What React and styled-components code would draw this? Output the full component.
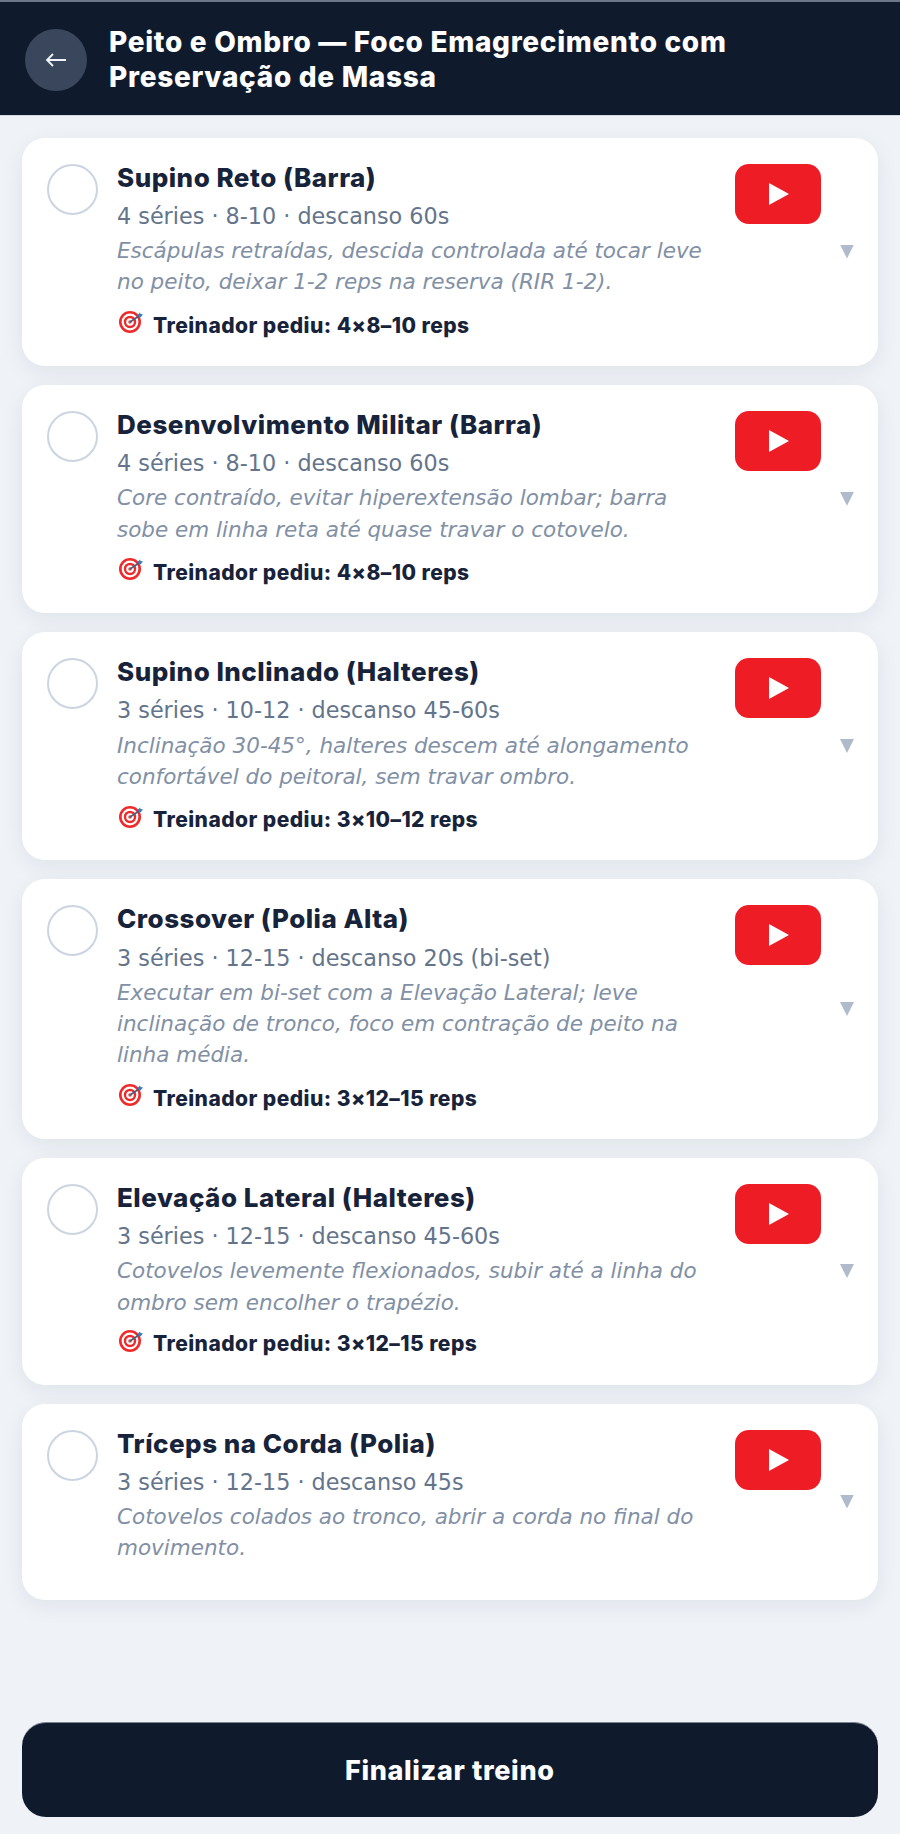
import React from 'react'
import styled, { createGlobalStyle } from 'styled-components'

const Global = createGlobalStyle`
  html, body { margin: 0; padding: 0; background: #eff3f8; }
  * { box-sizing: border-box; }
`

const Page = styled.div`
  width: 900px;
  height: 1834px;
  display: flex;
  flex-direction: column;
  background: #eff3f8;
  font-family: 'DejaVu Sans', sans-serif;
`

const Header = styled.header`
  height: 116px;
  flex: none;
  display: flex;
  align-items: center;
  gap: 22px;
  padding: 2px 22px 0 25px;
  background: #0f1b2d;
  border-top: 2px solid #6b7688;
  border-bottom: 1px solid #d5dae2;
`

const BackButton = styled.button`
  width: 62px;
  height: 62px;
  flex: none;
  display: flex;
  align-items: center;
  justify-content: center;
  padding: 0;
  border: 0;
  border-radius: 50%;
  background: #39465c;
  color: #f1f5f9;
`

const HeaderTitle = styled.h1`
  margin: 0;
  max-width: 700px;
  color: #fff;
  font-family: Inter, sans-serif;
  font-size: 28px;
  font-weight: 800;
  letter-spacing: 0.7px;
  line-height: 35px;
`

const List = styled.main`
  display: flex;
  flex-direction: column;
  gap: 19.1px;
  padding: 21.5px 22px 0 21.5px;
`

const Card = styled.article`
  display: flex;
  align-items: flex-start;
  padding: 24px 24px 24.2px 25px;
  background: #fff;
  border-radius: 23px;
  box-shadow: 0 6px 22px rgba(15, 27, 45, 0.07);
`

const Check = styled.span`
  width: 51px;
  height: 51px;
  flex: none;
  margin: 2px 19.5px 0 0;
  border: 2px solid #cbd5e1;
  border-radius: 50%;
`

const Body = styled.div`
  flex: 1;
  min-width: 0;
  margin-right: 24px;
`

const Name = styled.h2`
  margin: 0;
  color: #17233a;
  font-family: Inter, sans-serif;
  font-size: 26px;
  font-weight: 800;
  letter-spacing: 0.5px;
  line-height: 32px;
`

const Meta = styled.div`
  margin-top: 6.3px;
  color: #64748b;
  font-size: 22.3px;
  line-height: 32px;
`

const Note = styled.p`
  margin: 3.3px 0 12px;
  color: #8190a5;
  font-size: 21.5px;
  font-style: italic;
  line-height: 31.2px;
`

const Coach = styled.div`
  display: flex;
  align-items: center;
  gap: 10px;
  margin-top: ${p => (p.$tight ? '-1.5px' : '1.8px')};
  color: #17233a;
  font-family: Inter, sans-serif;
  font-size: 21px;
  font-weight: 800;
  letter-spacing: 0.45px;
  line-height: 32px;
`

const TargetSvg = styled.svg`
  flex: none;
  margin: 0 0 7px 2px;
`

const VideoButton = styled.button`
  width: 86px;
  height: 60px;
  flex: none;
  margin-top: 2px;
  display: flex;
  align-items: center;
  justify-content: center;
  padding: 0 0 0 2px;
  border: 0;
  border-radius: 14px;
  background: #ee1c25;
`

const Caret = styled.span`
  width: 14px;
  height: 14px;
  flex: none;
  align-self: center;
  margin-left: 19px;
  background: #afbacb;
  clip-path: polygon(0 0, 100% 0, 50% 100%);
`

const Footer = styled.footer`
  margin-top: auto;
  padding: 0 22px 17px 21.5px;
`

const FinishButton = styled.button`
  width: 100%;
  height: 95px;
  border: 0;
  border-top: 1px solid #7c8594;
  border-radius: 24px;
  background: #0f1b2d;
  color: #fff;
  font-family: Inter, sans-serif;
  font-size: 27px;
  font-weight: 800;
  letter-spacing: 0.65px;
`

const TargetIcon = () => (
  <TargetSvg width="24" height="22" viewBox="0 0 24 22">
    <circle cx="11" cy="11" r="11" fill="#ee2a2a" />
    <circle cx="11" cy="11" r="8.4" fill="#fff" />
    <circle cx="11" cy="11" r="6.2" fill="#ee2a2a" />
    <circle cx="11" cy="11" r="3.8" fill="#fff" />
    <circle cx="11" cy="11" r="1.8" fill="#d9534f" />
    <path d="M11 11 L20 5" stroke="#45607f" strokeWidth="1.6" />
    <path d="M18.5 4 L21 1.5 L21.5 3 L24 3.5 L21.5 6.5 Z" fill="#3d79b5" />
  </TargetSvg>
)

const exercises = [
  {
    name: 'Supino Reto (Barra)',
    meta: '4 séries · 8-10 · descanso 60s',
    note: 'Escápulas retraídas, descida controlada até tocar leve no peito, deixar 1-2 reps na reserva (RIR 1-2).',
    coach: '4×8–10 reps'
  },
  {
    name: 'Desenvolvimento Militar (Barra)',
    meta: '4 séries · 8-10 · descanso 60s',
    note: 'Core contraído, evitar hiperextensão lombar; barra sobe em linha reta até quase travar o cotovelo.',
    coach: '4×8–10 reps'
  },
  {
    name: 'Supino Inclinado (Halteres)',
    meta: '3 séries · 10-12 · descanso 45-60s',
    note: 'Inclinação 30-45°, halteres descem até alongamento confortável do peitoral, sem travar ombro.',
    coach: '3×10–12 reps'
  },
  {
    name: 'Crossover (Polia Alta)',
    meta: '3 séries · 12-15 · descanso 20s (bi-set)',
    note: 'Executar em bi-set com a Elevação Lateral; leve inclinação de tronco, foco em contração de peito na linha média.',
    coach: '3×12–15 reps'
  },
  {
    name: 'Elevação Lateral (Halteres)',
    meta: '3 séries · 12-15 · descanso 45-60s',
    note: 'Cotovelos levemente flexionados, subir até a linha do ombro sem encolher o trapézio.',
    coach: '3×12–15 reps',
    tight: true
  },
  {
    name: 'Tríceps na Corda (Polia)',
    meta: '3 séries · 12-15 · descanso 45s',
    note: 'Cotovelos colados ao tronco, abrir a corda no final do movimento.'
  }
]

export default function App () {
  return (
    <Page>
      <Global />
      <Header>
        <BackButton aria-label='Voltar'>
          <svg width="22" height="16" viewBox="0 0 22 16" fill="none" stroke="currentColor" strokeWidth="1.8">
            <path d="M21 8H2M8 2L2 8l6 6" />
          </svg>
        </BackButton>
        <HeaderTitle>Peito e Ombro — Foco Emagrecimento com Preservação de Massa</HeaderTitle>
      </Header>
      <List>
        {exercises.map(ex => (
          <Card key={ex.name}>
            <Check />
            <Body>
              <Name>{ex.name}</Name>
              <Meta>{ex.meta}</Meta>
              <Note>{ex.note}</Note>
              {ex.coach && (
                <Coach $tight={ex.tight}><TargetIcon />Treinador pediu: {ex.coach}</Coach>
              )}
            </Body>
            <VideoButton aria-label='Vídeo'>
              <svg width="20" height="22" viewBox="0 0 20 22"><path d="M0 0L20 11L0 22Z" fill="#fff" /></svg>
            </VideoButton>
            <Caret />
          </Card>
        ))}
      </List>
      <Footer>
        <FinishButton>Finalizar treino</FinishButton>
      </Footer>
    </Page>
  )
}
